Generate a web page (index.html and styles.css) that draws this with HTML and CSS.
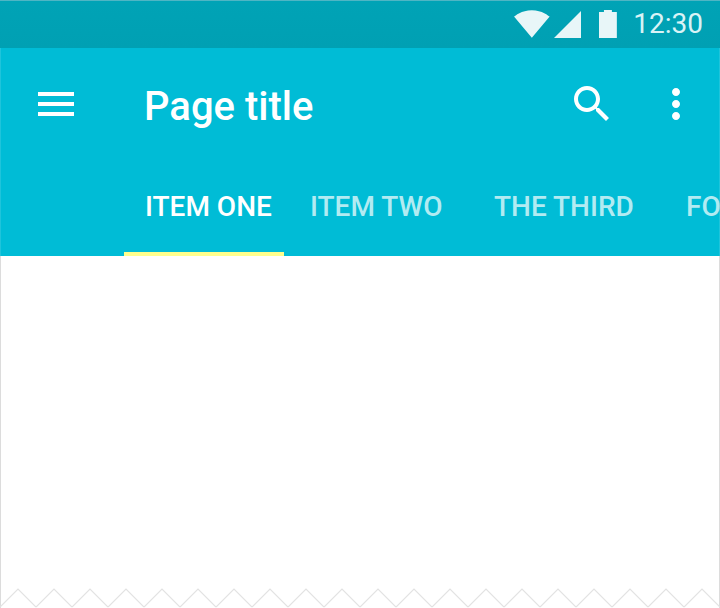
FILE: index.html
```html
<!DOCTYPE html>
<html lang="en">
<head>
  <meta charset="UTF-8">
  <title>Page title</title>
  <link rel="stylesheet" href="styles.css">
</head>
<body>

<div class="phone">
  <header class="appbar">
    <div class="statusbar">
      <svg class="wifi" viewBox="0 0 36 28"><path d="M18 28L36 6.500C35 5.800 28.500 0 18 0S1 5.800 0 6.500z"/></svg>
      <svg class="signal" viewBox="0 0 28 28"><path d="M0 28h28V0z"/></svg>
      <svg class="battery" viewBox="0 0 18 28"><path d="M0 2h5V0h8v2h5v26H0z"/></svg>
      <span class="time">12:30</span>
    </div>

    <div class="toolbar">
      <svg class="icon" viewBox="0 0 24 24"><path d="M3 18h18v-2H3v2zm0-5h18v-2H3v2zm0-7v2h18V6H3z"/></svg>
      <h1 class="title">Page title</h1>
      <svg class="icon" viewBox="0 0 24 24"><path d="M15.500 14h-.79l-.28-.27C15.410 12.590 16 11.110 16 9.500 16 5.910 13.090 3 9.500 3S3 5.910 3 9.500 5.910 16 9.500 16c1.610 0 3.090-.59 4.230-1.570l.27.28v.79l5 4.990L20.490 19l-4.990-5zm-6 0C7.010 14 5 11.990 5 9.500S7.010 5 9.500 5 14 7.010 14 9.500 11.990 14 9.500 14z"/></svg>
      <svg class="icon" viewBox="0 0 24 24"><path d="M12 8c1.100 0 2-.9 2-2s-.9-2-2-2-2 .9-2 2 .9 2 2 2zm0 2c-1.100 0-2 .9-2 2s.9 2 2 2 2-.9 2-2-.9-2-2-2zm0 6c-1.100 0-2 .9-2 2s.9 2 2 2 2-.9 2-2-.9-2-2-2z"/></svg>
    </div>

    <nav class="tabs">
      <a class="tab tab-one active">ITEM ONE</a>
      <a class="tab tab-two">ITEM TWO</a>
      <a class="tab tab-three">THE THIRD</a>
      <a class="tab tab-four">FOUR</a>
    </nav>
  </header>

  <main class="content"></main>

  <svg class="zigzag" width="720" height="20" viewBox="0 0 720 20">
    <defs>
      <pattern id="zig" width="36" height="20" patternUnits="userSpaceOnUse">
        <path d="M0 19L18 1L36 19" fill="none" stroke="#e2e2e2" stroke-width="1.2"/>
      </pattern>
    </defs>
    <rect width="720" height="20" fill="url(#zig)"/>
  </svg>
</div>

</body>
</html>
```

FILE: styles.css
```css
html, body {
  margin: 0;
  height: 100%;
  overflow: hidden;
  background: #fff;
}

.phone {
  height: 608px;
  display: flex;
  flex-direction: column;
  font-family: Roboto, sans-serif;
  border-left: 1px solid #dcdcdc;
  border-right: 1px solid #dcdcdc;
  box-sizing: border-box;
}

.appbar {
  margin: 0 -1px;
  background: #00bcd6;
  color: #fff;
  box-shadow: inset 1px 0 0 rgba(255, 255, 255, 0.12), inset -1px 0 0 rgba(255, 255, 255, 0.12);
}

.statusbar {
  height: 48px;
  box-sizing: border-box;
  display: flex;
  align-items: flex-start;
  padding: 10px 17px 0 514px;
  background: linear-gradient(#00a3b6, #00a0b3);
  border-top: 1px solid #4fb5c4;
}

.statusbar svg {
  fill: #e8f6f8;
  height: 28px;
  display: block;
  margin-top: -1px;
}

.wifi { width: 36px; }

.signal {
  width: 28px;
  margin-left: 4px;
}

.statusbar .battery {
  width: 18px;
  margin-left: 18px;
}

.time {
  margin-left: 16px;
  font-size: 28px;
  line-height: 28px;
  color: #d9f3f6;
  margin-top: -1px;
}

.toolbar {
  height: 112px;
  box-sizing: border-box;
  padding: 32px 20px 0 32px;
  display: flex;
  align-items: flex-start;
}

.icon {
  width: 48px;
  height: 48px;
  fill: #fff;
  display: block;
  flex: none;
}

.icon:last-child {
  margin-left: 36px;
}

.title {
  flex: 1;
  margin: 0 0 0 64px;
  font-size: 40px;
  font-weight: 500;
  line-height: 54px;
}

.tabs {
  height: 96px;
  padding-left: 124px;
  display: flex;
  overflow: hidden;
}

.tab {
  flex: none;
  box-sizing: border-box;
  height: 96px;
  line-height: 94px;
  font-size: 28px;
  font-weight: 500;
  white-space: nowrap;
  color: #b2ebf2;
}

.tab-one {
  width: 160px;
  padding-left: 21px;
}

.tab-two {
  width: 184px;
  padding-left: 26px;
}

.tab-three {
  width: 192px;
  padding-left: 26px;
}

.tab-four {
  padding-left: 26px;
}

.tab.active {
  color: #fff;
  border-bottom: 4px solid #ffff8d;
}

.content {
  flex: 1;
}

.zigzag {
  display: block;
  margin: 0 -1px;
  flex: none;
}
```
